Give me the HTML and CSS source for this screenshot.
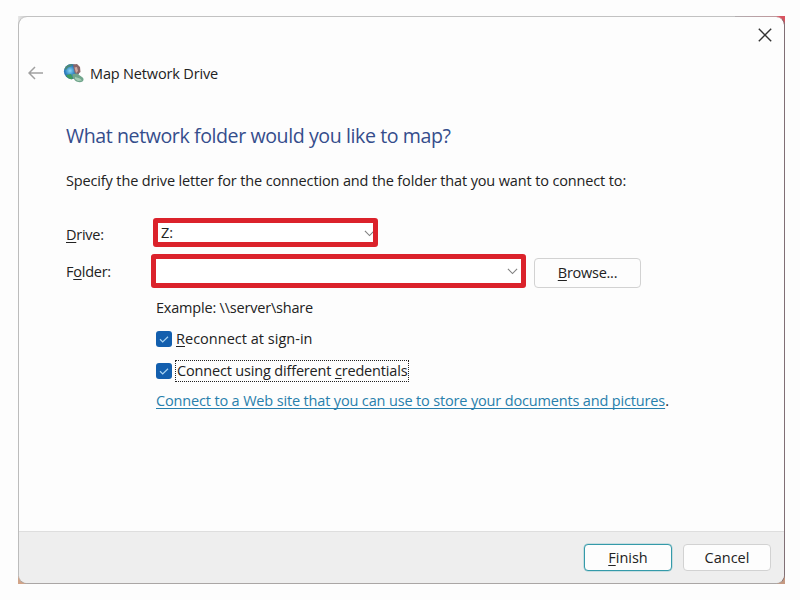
FILE: index.html
```html
<!DOCTYPE html>
<html lang="en">
<head>
<meta charset="utf-8">
<title>Map Network Drive</title>
<link rel="stylesheet" href="styles.css">
</head>
<body>
<div class="frame">
  <main class="dialog">
    <header class="titlebar">
      <svg class="close" viewBox="0 0 14 14"><path d="M.8.8l12.4 12.4M13.2.8L.8 13.2"/></svg>
    </header>
    <div class="caption">
      <svg class="back" viewBox="0 0 16 14"><path d="M15 7H1.2M7 1L1 7l6 6"/></svg>
      <svg class="drive-icon" viewBox="0 0 22 21">
        <defs>
          <radialGradient id="globe" cx=".4" cy=".45" r=".6"><stop offset="0" stop-color="#8fd8f5"/><stop offset=".5" stop-color="#3287c6"/><stop offset="1" stop-color="#1c4a86"/></radialGradient>
        </defs>
        <circle cx="8.5" cy="8.5" r="7.6" fill="url(#globe)"/>
        <path d="M1.5 6C3 2 7 .8 10 1.4L8 3.5 5 4.5 3 7z" fill="#4b8a78"/>
        <path d="M3 12l5-1 2 4-1 1.5c-3-.5-5-2-6-4.5z" fill="#3f9b5e"/>
        <path d="M10 1.5l4-.5 3 3 .5 5-4 3-2-3z" fill="#8a6668"/>
        <path d="M11.5 4.5l2.5-.5 1 4-2 2z" fill="#d0a8a0"/>
        <path d="M9.5 11l4.500-.5 5 3.500c2 1 2 3.500.5 4.500s-5.500 1-7.500-1L9.500 14z" fill="#70a58c"/>
        <path d="M12 14l5 1.500 2 2-4 .5-3-2z" fill="#a6ceb7"/>
      </svg>
      <span class="caption-text">Map Network Drive</span>
    </div>
    <section class="content">
      <h1>What network folder would you like to map?</h1>
      <p class="intro">Specify the drive letter for the connection and the folder that you want to connect to:</p>
      <div class="row row-drive">
        <label><u>D</u>rive:</label>
        <div class="combo combo-drive"><span>Z:</span><svg class="chevron" viewBox="0 0 12 7"><path d="M1 1l5 5 5-5"/></svg></div>
      </div>
      <div class="row row-folder">
        <label>F<u>o</u>lder:</label>
        <div class="combo combo-folder"><svg class="chevron" viewBox="0 0 12 7"><path d="M1 1l5 5 5-5"/></svg></div>
        <button class="browse"><u>B</u>rowse...</button>
      </div>
      <div class="options">
        <p class="example">Example: \\server\share</p>
        <div class="check"><i class="box"><svg viewBox="0 0 16 16"><path d="M4 8.3l2.7 2.6L12 5.700"/></svg></i><span class="check-label reconnect"><u>R</u>econnect at sign-in</span></div>
        <div class="check"><i class="box"><svg viewBox="0 0 16 16"><path d="M4 8.3l2.7 2.6L12 5.700"/></svg></i><span class="check-label focused">Connect using different <u>c</u>redentials</span></div>
        <p class="link"><a>Connect to a Web site that you can use to store your documents and pictures</a>.</p>
      </div>
    </section>
    <footer>
      <button class="primary"><u>F</u>inish</button>
      <button>Cancel</button>
    </footer>
  </main>
</div>
</body>
</html>
```
FILE: styles.css
```css
* { box-sizing: border-box; }
body {
  margin: 0;
  padding: 16px 15px 16px 18px;
  height: 600px;
  overflow: hidden;
  background: #fdfdfd;
  color: #222;
  font: 14.5px/20px "Open Sans", "Noto Sans", sans-serif;
  letter-spacing: -0.14px;
}
h1, p { margin: 0; font-weight: 400; white-space: nowrap; }
span, label { white-space: nowrap; }
u { text-decoration: underline; text-decoration-thickness: 1px; text-underline-offset: 2px; text-decoration-skip-ink: none; }
svg { display: block; fill: none; flex: none; }
.frame {
  height: 568px;
  background:
    linear-gradient(#d9535f, #d9535f) right top / 8px 8px no-repeat,
    linear-gradient(90deg, #a39a9f, #c86670) right top / 50px 1px no-repeat,
    linear-gradient(#c69a82, #c69a82) right bottom / 8px 8px no-repeat,
    linear-gradient(#d2a488, #d2a488) left bottom / 8px 8px no-repeat,
    linear-gradient(90deg, #e8e8e8, #c4c4c4 9px);
}
.dialog {
  height: 568px;
  display: flex;
  flex-direction: column;
  border: 1px solid #bcbcbc;
  border-top-color: #c0c0c080;
  border-right-color: #806f75;
  border-bottom-color: #aaa6a5;
  border-radius: 9px;
  background: #fdfdfd padding-box;
  overflow: hidden;
}
.titlebar { height: 41px; flex: none; display: flex; justify-content: flex-end; padding: 11px 12px 0 0; }
.close { width: 14px; height: 14px; stroke: #333; stroke-width: 1.4; }
.caption { height: 30px; flex: none; display: flex; align-items: center; padding-left: 9px; }
.back { width: 16px; height: 14px; stroke: #a0a0a0; stroke-width: 1.5; }
.drive-icon { width: 22px; height: 21px; margin: 0 5px 0 19px; }
.caption-text { padding-top: 1px; letter-spacing: -0.16px; }
.content { flex: 1; padding: 33px 0 0 47px; }
h1 { height: 30px; font-size: 19.6px; line-height: 30px; letter-spacing: -0.42px; color: #354d8c; }
.intro { margin-top: 20px; }
.row { display: flex; align-items: center; }
.row label { width: 87px; flex: none; letter-spacing: -0.25px; }
.row-drive { height: 29px; margin-top: 27px; }
.row-drive label { padding-top: 4px; }
.row-folder { height: 34px; margin-top: 7px; }
.row-folder label { width: 86px; padding-top: 2px; }
.combo { display: flex; align-items: center; justify-content: space-between; border: 5px solid #db222b; border-radius: 3px; background: #fff; }
.combo-drive { width: 225px; height: 29px; padding-left: 3px; overflow: hidden; }
.combo-drive .chevron { margin: 2px -2px 0 0; }
.combo-folder { width: 375px; height: 34px; padding-right: 3px; justify-content: flex-end; }
.combo-folder { margin-left: -1px; }
.combo-folder .chevron { margin-top: 1px; }
.chevron { width: 11px; height: 6.5px; stroke: #808080; stroke-width: 1.2; }
button { height: 27px; padding: 0; border: 1px solid #d2d2d2; border-radius: 4px; background: #fdfdfd; color: inherit; font: inherit; letter-spacing: 0; }
.browse { width: 107px; height: 30px; margin: 3px 0 0 8px; letter-spacing: -0.25px; }
.options { padding: 10px 0 0 90px; }
.example { letter-spacing: -0.2px; }
.check { display: flex; align-items: center; height: 22px; margin-top: 10px; }
.box { width: 16px; height: 16px; border-radius: 3px; background: #135fae; flex: none; }
.box svg { width: 16px; height: 16px; stroke: #a9d4f3; stroke-width: 1.2; }
.check-label { height: 22px; margin-left: 3px; padding: 0 1px; border: 1px solid transparent; letter-spacing: -0.17px; }
.reconnect { letter-spacing: 0.02px; margin-left: 2px; }
.focused { border: 1px dotted #222; }
.link { margin-top: 9px; letter-spacing: -0.155px; }
a { color: #287fac; text-decoration: underline; text-decoration-thickness: 1px; text-underline-offset: 2px; text-decoration-skip-ink: none; }
footer { height: 52px; flex: none; display: flex; justify-content: flex-end; gap: 11px; padding: 12px 13px 0 0; border-top: 1px solid #dedede; background: #eee; }
footer button { width: 88px; }
footer .primary { border: 1.5px solid #349aa9; box-shadow: 0 0 0 .5px #349aa966; }
```
